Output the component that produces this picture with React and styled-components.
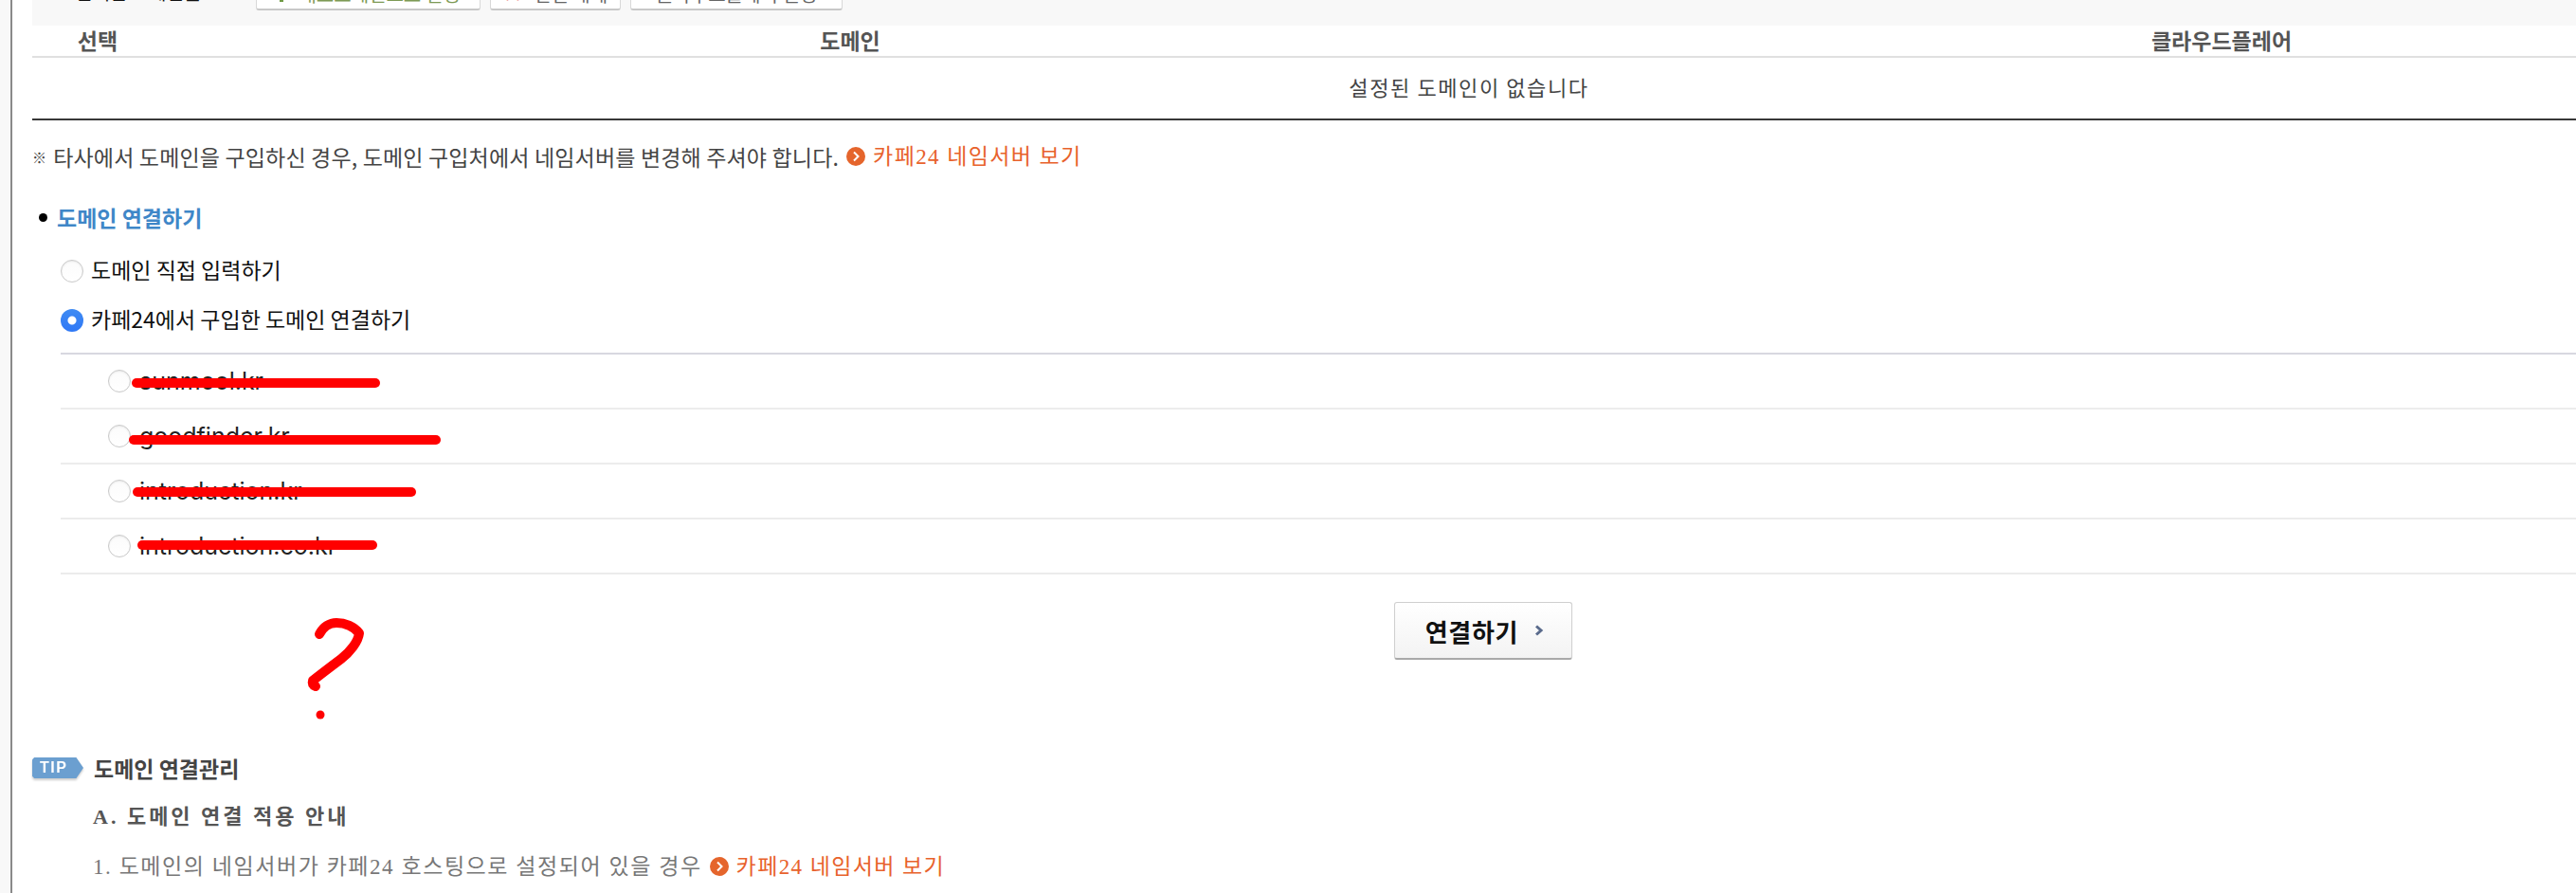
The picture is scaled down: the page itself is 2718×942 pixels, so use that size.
import React from "react";
import styled, { createGlobalStyle } from "styled-components";

const sans = `"Noto Sans CJK KR", "Noto Sans", sans-serif`;
const serif = `"Liberation Serif", "Noto Sans CJK KR", serif`;

const GlobalStyle = createGlobalStyle`
  html, body {
    margin: 0;
    padding: 0;
    height: 942px;
    overflow: hidden;
    background: #f8f8f8;
  }
`;

const Frame = styled.div`
  position: relative;
  width: 3100px;
  height: 942px;
  margin-left: 11px;
  padding-left: 21px;
  box-sizing: border-box;
  background: #fff;
  border-left: 2px solid #8a8a8a;
  font-family: ${sans};
  font-size: 23px;
  line-height: 1;
`;

const Content = styled.div`
  width: 3032px;
`;

const Toolbar = styled.div`
  display: flex;
  align-items: flex-end;
  gap: 10px;
  height: 27px;
  padding: 0 0 16px 45px;
  box-sizing: border-box;
  background: #f8f8f8;
  overflow: hidden;
  font-size: 20px;
`;

const ToolbarLabel = styled.span`
  width: 181px;
  height: 34px;
  flex: none;
  line-height: 30px;
  color: #111;
`;

const ToolButton = styled.button`
  display: flex;
  align-items: center;
  justify-content: center;
  flex: none;
  gap: 12px;
  width: ${(p) => p.$width}px;
  height: 34px;
  padding: 0;
  font: inherit;
  color: ${(p) => p.$color || "#666"};
  background: #fff;
  border: 1px solid #d8d8d8;
  border-bottom: 2px solid #c8c8c8;
  border-radius: 3px;
`;

const CrossMark = styled.span`
  color: #e88;
`;

const HeadRow = styled.div`
  display: grid;
  grid-template-columns: 138px 1450px 1444px;
  height: 34px;
  border-bottom: 2px solid #e0e0e0;
  box-sizing: border-box;
`;

const HeadCell = styled.div`
  line-height: 30px;
  text-align: center;
  font-weight: 700;
  color: #555;
`;

const EmptyRow = styled.div`
  height: 66px;
  line-height: 60px;
  box-sizing: border-box;
  text-align: center;
  font-size: 22px;
  color: #444;
  letter-spacing: 1.6px;
  border-bottom: 2px solid #383838;
`;

const Notice = styled.div`
  display: flex;
  align-items: center;
  height: 76px;
  color: #444;
  letter-spacing: 0.17px;
`;

const NoteMark = styled.span`
  margin-right: 7px;
  font-size: 15px;
`;

const OrangeLink = styled.a`
  display: inline-flex;
  align-items: center;
  margin-left: 8px;
  gap: 8px;
  font-family: ${serif};
  color: #e8622c;
  letter-spacing: 1.4px;
`;

const SectionTitle = styled.h3`
  display: flex;
  align-items: center;
  gap: 10px;
  height: 52px;
  margin: 0 0 5px 7px;
  font-size: 23px;
  font-weight: 700;
  color: #3f87c8;

  &::before {
    content: "";
    width: 9px;
    height: 9px;
    border-radius: 50%;
    background: #000;
  }
`;

const Choices = styled.div`
  margin-left: 30px;
`;

const Choice = styled.label`
  display: flex;
  align-items: center;
  gap: 8px;
  height: 52px;
  color: #111;
`;

const ChoiceText = styled.span`
  padding-bottom: 4px;
`;

const Radio = styled.input.attrs({ type: "radio" })`
  appearance: none;
  flex: none;
  width: 24px;
  height: 24px;
  margin: 0;
  border: 1px solid #c9c9c9;
  border-radius: 50%;
  background: linear-gradient(#fbfbfb, #ffffff);
  box-shadow: inset 0 1px 2px rgba(0, 0, 0, 0.08);

  &:checked {
    border: none;
    box-shadow: none;
    background: radial-gradient(circle, #fff 0 4px, transparent 5px),
      linear-gradient(#3f8bf3, #2f78f6);
  }
`;

const DomainList = styled.div`
  margin-top: 8px;
  border-top: 2px solid #d8d8e0;
`;

const DomainRow = styled.label`
  position: relative;
  display: flex;
  align-items: center;
  gap: 9px;
  height: 58px;
  padding-left: 50px;
  box-sizing: border-box;
  border-bottom: 2px solid #ececec;
  font-family: Inter, sans-serif;
  font-size: 25px;
  color: #222;
`;

const Scribble = styled.span`
  position: absolute;
  left: ${(p) => p.$left}px;
  top: ${(p) => p.$top}px;
  width: ${(p) => p.$width}px;
  height: 10px;
  border-radius: 5px;
  background: #ff0000;
`;

const Actions = styled.div`
  display: flex;
  justify-content: center;
  padding-top: 29px;
`;

const ConnectButton = styled.button`
  display: flex;
  align-items: center;
  justify-content: center;
  gap: 17px;
  width: 188px;
  height: 61px;
  padding: 0 0 0 3px;
  font-family: ${sans};
  font-size: 26px;
  font-weight: 700;
  letter-spacing: 0.7px;
  color: #111;
  background: linear-gradient(#ffffff, #f3f3f3);
  border: 1px solid #cfcfcf;
  border-bottom: 2px solid #a9a9a9;
  border-radius: 3px;
`;

const QuestionMark = styled.svg`
  position: absolute;
  left: 267px;
  top: 620px;
`;

const TipRow = styled.div`
  display: flex;
  align-items: center;
  gap: 11px;
  height: 24px;
  margin-top: 102px;
  margin-bottom: 14px;
  font-weight: 700;
  color: #444;
`;

const TipShadow = styled.span`
  display: flex;
  filter: drop-shadow(0 2px 1px rgba(0, 0, 0, 0.2));
`;

const TipBadge = styled.span`
  display: flex;
  align-items: center;
  width: 54px;
  height: 22px;
  padding-left: 8px;
  box-sizing: border-box;
  font-family: "Liberation Sans", sans-serif;
  font-size: 16px;
  font-weight: 700;
  letter-spacing: 1.5px;
  color: #fff;
  background: #6b9fd0;
  clip-path: polygon(0 10%, 4% 0, 86% 0, 100% 50%, 86% 100%, 4% 100%, 0 90%);
`;

const TipLine = styled.div`
  display: flex;
  align-items: center;
  height: 52px;
  padding-left: 64px;
  font-family: ${serif};
  font-size: ${(p) => (p.$strong ? 22 : 23)}px;
  letter-spacing: ${(p) => (p.$strong ? "3px" : "1.55px")};
  font-weight: ${(p) => (p.$strong ? 700 : 400)};
  color: ${(p) => (p.$strong ? "#555" : "#777")};
`;

const Bullet = () => (
  <svg width="20" height="20" viewBox="0 0 20 20">
    <circle cx="10" cy="10" r="10" fill="#e5652c" />
    <path d="M8 5.5l4.5 4.5L8 14.5" fill="none" stroke="#fff" strokeWidth="2" />
  </svg>
);

const domains = [
  { name: "sunmool.kr", left: 75, top: 25, width: 262 },
  { name: "goodfinder.kr", left: 72, top: 27, width: 329 },
  { name: "introduction.kr", left: 76, top: 24, width: 299 },
  { name: "introduction.co.kr", left: 81, top: 22, width: 253 },
];

export default function App() {
  return (
    <Frame>
      <GlobalStyle />
      <Content>
        <Toolbar>
          <ToolbarLabel>선택한 도메인을</ToolbarLabel>
          <ToolButton $width={237} $color="#7d9a55">
            <svg width="12" height="16" viewBox="0 0 12 16">
              <path d="M6 0l6 8H8v8H4V8H0z" fill="#6f9a45" />
            </svg>
            대표도메인으로 설정
          </ToolButton>
          <ToolButton $width={138}>
            <CrossMark>×</CrossMark>
            연결 해제
          </ToolButton>
          <ToolButton $width={224}>클라우드플레어 설정</ToolButton>
        </Toolbar>
        <HeadRow>
          <HeadCell>선택</HeadCell>
          <HeadCell>도메인</HeadCell>
          <HeadCell>클라우드플레어</HeadCell>
        </HeadRow>
        <EmptyRow>설정된 도메인이 없습니다</EmptyRow>
        <Notice>
          <NoteMark>※</NoteMark>
          타사에서 도메인을 구입하신 경우, 도메인 구입처에서 네임서버를 변경해 주셔야 합니다.
          <OrangeLink>
            <Bullet />
            카페24 네임서버 보기
          </OrangeLink>
        </Notice>
        <SectionTitle>도메인 연결하기</SectionTitle>
        <Choices>
          <Choice>
            <Radio name="mode" />
            <ChoiceText>도메인 직접 입력하기</ChoiceText>
          </Choice>
          <Choice>
            <Radio name="mode" defaultChecked />
            <ChoiceText>카페24에서 구입한 도메인 연결하기</ChoiceText>
          </Choice>
          <DomainList>
            {domains.map((d) => (
              <DomainRow key={d.name}>
                <Radio name="domain" />
                {d.name}
                <Scribble $left={d.left} $top={d.top} $width={d.width} />
              </DomainRow>
            ))}
          </DomainList>
          <Actions>
            <ConnectButton>
              연결하기
              <svg width="10" height="12" viewBox="0 0 10 12">
                <path d="M2 1.5L7 6l-5 4.5" fill="none" stroke="#5a6b8c" strokeWidth="3" />
              </svg>
            </ConnectButton>
          </Actions>
        </Choices>
        <TipRow>
          <TipShadow>
            <TipBadge>TIP</TipBadge>
          </TipShadow>
          도메인 연결관리
        </TipRow>
        <TipLine $strong>A. 도메인 연결 적용 안내</TipLine>
        <TipLine>
          1. 도메인의 네임서버가 카페24 호스팅으로 설정되어 있을 경우
          <OrangeLink>
            <Bullet />
            카페24 네임서버 보기
          </OrangeLink>
        </TipLine>
      </Content>
      <QuestionMark width="200" height="150" viewBox="0 0 200 150">
        <path
          d="M57 49C61 41 68 37 75 37C84 37 94 41 99 48C98 57 89 68 80 75C72 81 60 90 50 98C49 101 50 103 53 104"
          fill="none"
          stroke="#ff0000"
          strokeWidth="10"
          strokeLinecap="round"
          strokeLinejoin="round"
        />
        <circle cx="58" cy="134" r="4.5" fill="#ff0000" />
      </QuestionMark>
    </Frame>
  );
}
